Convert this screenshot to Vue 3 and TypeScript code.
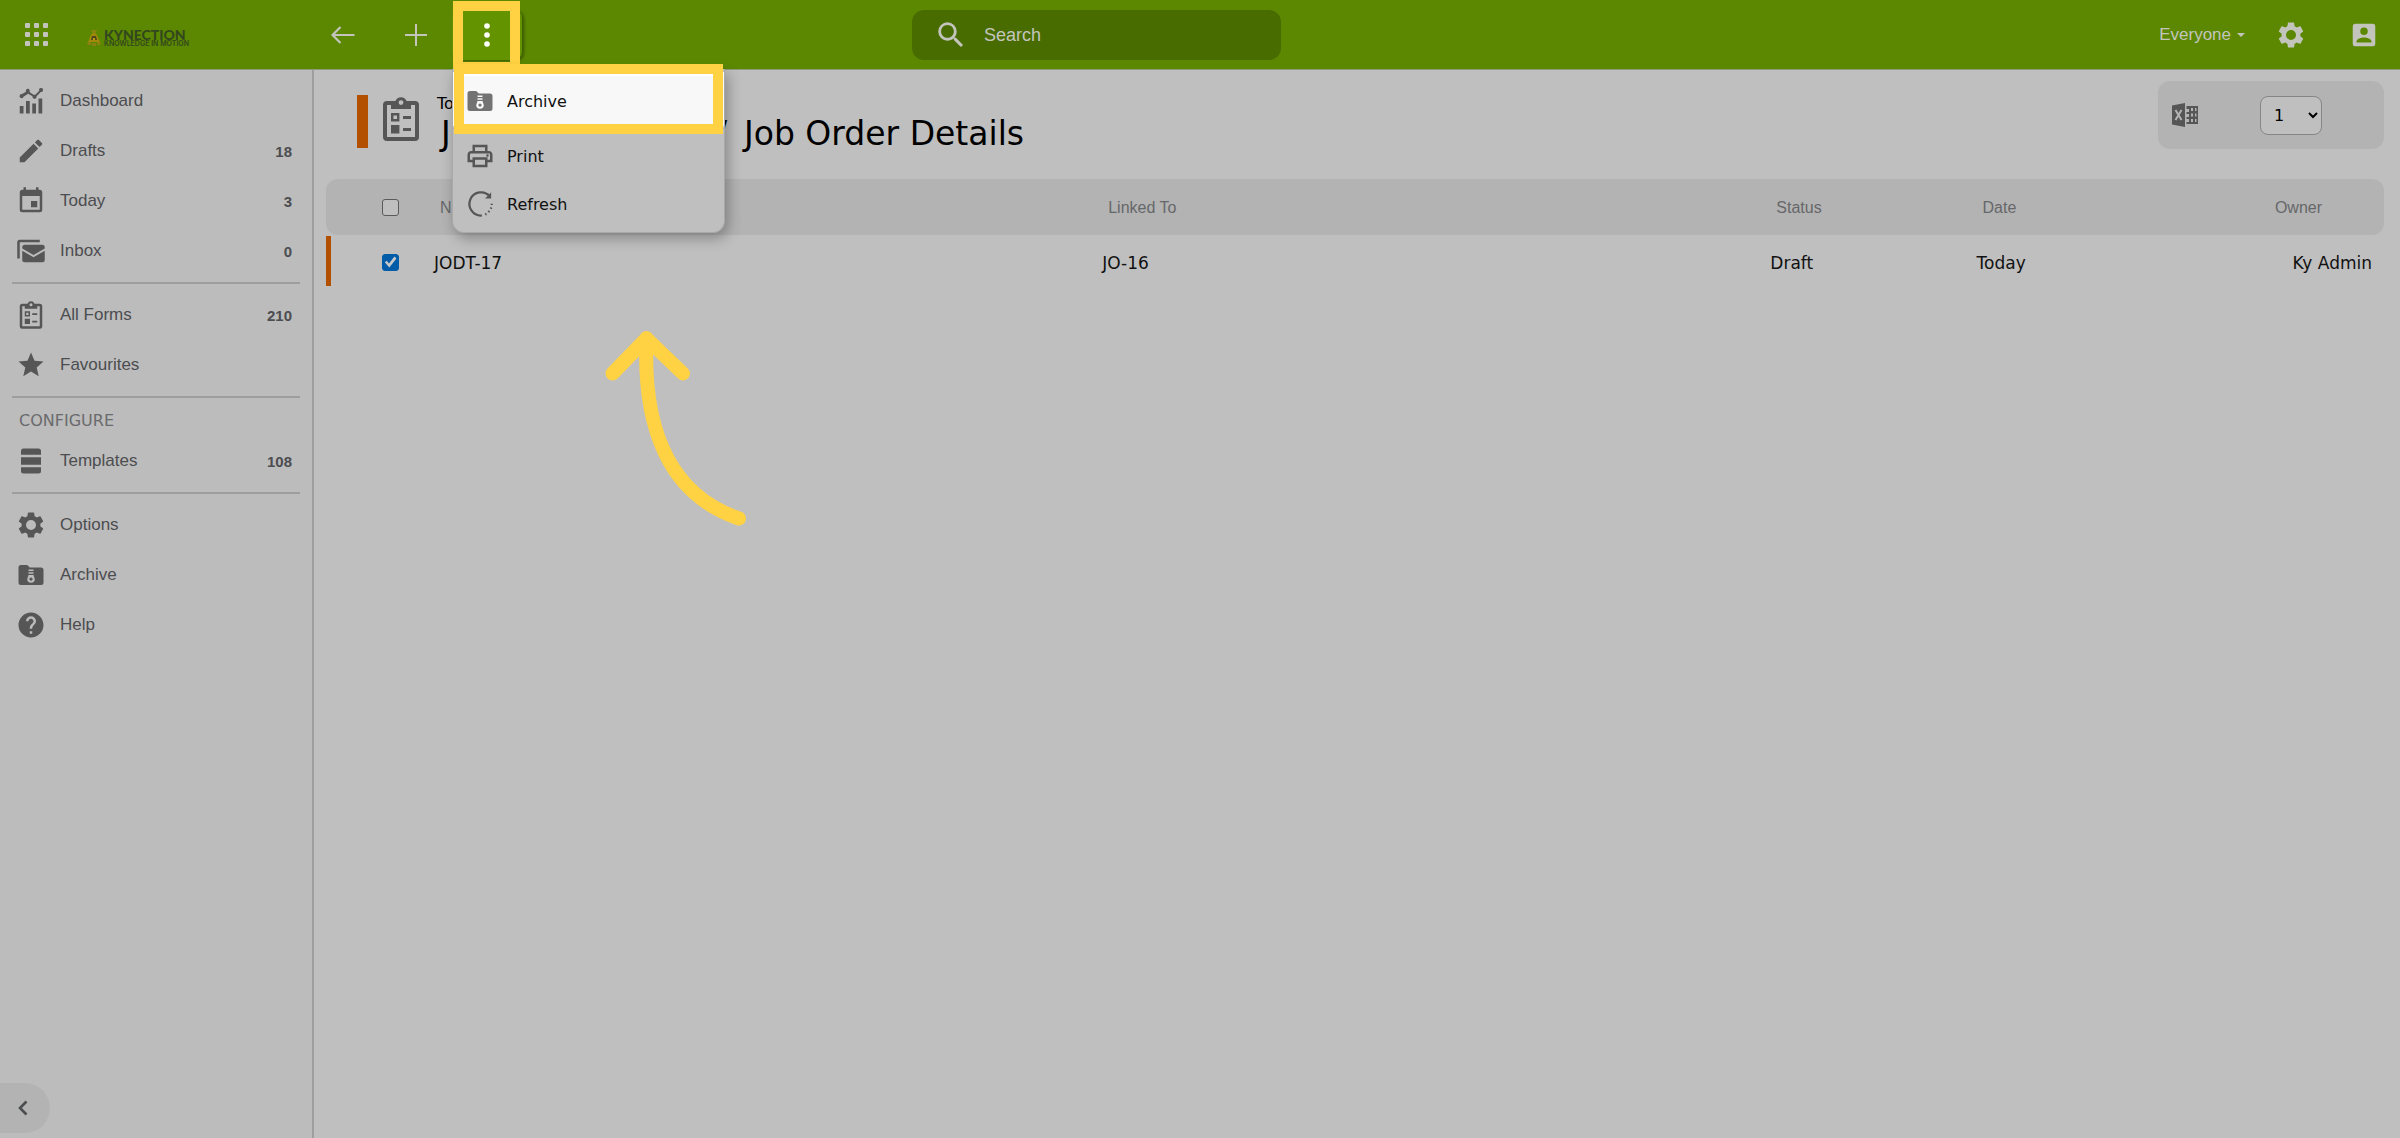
<script setup lang="ts">
import { ref } from 'vue'

type IconName =
  | 'chart' | 'pencil' | 'today' | 'inbox' | 'forms' | 'star'
  | 'templates' | 'cog' | 'archive' | 'help' | 'printer' | 'account' | 'magnify'

interface NavItem {
  label: string
  icon: IconName
  count?: number
}

interface NavGroup {
  title?: string
  items: NavItem[]
}

interface JobRow {
  name: string
  linkedTo: string
  status: string
  date: string
  owner: string
  selected: boolean
}

const icons: Record<IconName, string> = {
  chart:
    'M3 16h3v6H3zM8 12h3v10H8zM13 14h3v8h-3zM18 10h3v12h-3zM4.500 6.500 8 4.500a1.600 1.600 0 1 1 2.800.2L14 7h1.400l3.200-3.200a1.600 1.600 0 1 1 1.200 1L16.500 8.200a1.700 1.700 0 1 1-3.300 0L9.700 6.200 6 8.500a1.600 1.600 0 1 1-1.500-2Z',
  pencil:
    'M20.71,7.04C21.1,6.65 21.1,6 20.71,5.63L18.37,3.29C18,2.9 17.35,2.9 16.96,3.29L15.12,5.12L18.87,8.87M3,17.25V21H6.75L17.81,9.93L14.06,6.18L3,17.25Z',
  today:
    'M19,19H5V8H19M16,1V3H8V1H6V3H5C3.89,3 3,3.89 3,5V19A2,2 0 0,0 5,21H19A2,2 0 0,0 21,19V5C21,3.89 20.1,3 19,3H18V1M17,12H12V17H17V12Z',
  inbox:
    'M1 18V5a2 2 0 0 1 2-2H19v2H3v13ZM7 7H21a2 2 0 0 1 2 2v1L14 15.2 5 10V9a2 2 0 0 1 2-2ZM5 11.8 14 17l9-5.200V19a2 2 0 0 1-2 2H7a2 2 0 0 1-2-2Z',
  forms:
    'M5 3H9.200A3 3 0 0 1 14.800 3H19a2 2 0 0 1 2 2V21a2 2 0 0 1-2 2H5a2 2 0 0 1-2-2V5A2 2 0 0 1 5 3ZM5 5V21H19V5H17V7H7V5ZM12 2.600a1.200 1.200 0 1 0 0 2.400a1.200 1.200 0 1 0 0-2.400ZM7 9h4.200v4.200H7ZM8.200 10.200v1.800h1.800v-1.800ZM7 15h4.200v4.200H7ZM13 10.500h4v1.500h-4ZM13 16.500h4v1.500h-4Z',
  star:
    'M12,17.27L18.18,21L16.54,13.97L22,9.24L14.81,8.62L12,2L9.19,8.62L2,9.24L7.45,13.97L5.82,21L12,17.27Z',
  templates:
    'M6 2H18a2 2 0 0 1 2 2V7H4V4A2 2 0 0 1 6 2ZM4 9H20v6H4ZM4 17H20v3a2 2 0 0 1-2 2H6a2 2 0 0 1-2-2Z',
  cog:
    'M12,16A4,4 0 0,1 8,12A4,4 0 0,1 12,8A4,4 0 0,1 16,12A4,4 0 0,1 12,16M19.43,12.97C19.47,12.65 19.5,12.33 19.5,12C19.5,11.67 19.47,11.34 19.43,11L21.54,9.37C21.73,9.22 21.78,8.95 21.66,8.73L19.66,5.27C19.54,5.05 19.27,4.96 19.05,5.05L16.56,6.05C16.04,5.66 15.5,5.32 14.87,5.07L14.5,2.42C14.46,2.18 14.25,2 14,2H10C9.75,2 9.54,2.18 9.5,2.42L9.13,5.07C8.5,5.32 7.96,5.66 7.44,6.05L4.95,5.05C4.73,4.96 4.46,5.05 4.34,5.27L2.34,8.73C2.21,8.95 2.27,9.22 2.46,9.37L4.57,11C4.53,11.34 4.5,11.67 4.5,12C4.5,12.33 4.53,12.65 4.57,12.97L2.46,14.63C2.27,14.78 2.21,15.05 2.34,15.27L4.34,18.73C4.46,18.95 4.73,19.03 4.95,18.95L7.44,17.94C7.96,18.34 8.5,18.68 9.13,18.93L9.5,21.58C9.54,21.82 9.75,22 10,22H14C14.25,22 14.46,21.82 14.5,21.58L14.87,18.93C15.5,18.67 16.04,18.34 16.56,17.94L19.05,18.95C19.27,19.03 19.54,18.95 19.66,18.73L21.66,15.27C21.78,15.05 21.73,14.78 21.54,14.63L19.43,12.97Z',
  archive:
    'M4 4H9l2 2H20a2 2 0 0 1 2 2V18a2 2 0 0 1-2 2H4a2 2 0 0 1-2-2V6A2 2 0 0 1 4 4ZM10 7.500h4v1.200h-4ZM10 9.700h4v1.200h-4ZM10 11.900h4l1 3.200a3 3 0 1 1-6 0ZM12 13.900a1.300 1.300 0 1 0 0 2.600a1.300 1.300 0 1 0 0-2.600Z',
  help:
    'M15.07,11.25L14.17,12.17C13.45,12.89 13,13.5 13,15H11V14.5C11,13.39 11.45,12.39 12.17,11.67L13.41,10.41C13.78,10.05 14,9.55 14,9C14,7.89 13.1,7 12,7A2,2 0 0,0 10,9H8A4,4 0 0,1 12,5A4,4 0 0,1 16,9C16,9.88 15.64,10.67 15.07,11.25M13,19H11V17H13M12,2A10,10 0 0,0 2,12A10,10 0 0,0 12,22A10,10 0 0,0 22,12C22,6.47 17.5,2 12,2Z',
  printer:
    'M19 8C20.66 8 22 9.34 22 11V17H18V21H6V17H2V11C2 9.34 3.34 8 5 8H6V3H18V8H19M8 5V8H16V5H8M16 19V15H8V19H16M18 15H20V11C20 10.45 19.55 10 19 10H5C4.45 10 4 10.45 4 11V15H6V13H18V15M19 11.5C19 12.05 18.55 12.5 18 12.5C17.45 12.5 17 12.05 17 11.5C17 10.95 17.45 10.5 18 10.5C18.55 10.5 19 10.95 19 11.5Z',
  account:
    'M6,17C6,15 10,13.9 12,13.9C14,13.9 18,15 18,17V18H6M15,9A3,3 0 0,1 12,12A3,3 0 0,1 9,9A3,3 0 0,1 12,6A3,3 0 0,1 15,9M3,5V19A2,2 0 0,0 5,21H19A2,2 0 0,0 21,19V5A2,2 0 0,0 19,3H5C3.89,3 3,3.9 3,5Z',
  magnify:
    'M9.5,3A6.5,6.5 0 0,1 16,9.5C16,11.11 15.41,12.59 14.44,13.73L14.71,14H15.5L20.5,19L19,20.5L14,15.5V14.71L13.73,14.44C12.59,15.41 11.11,16 9.5,16A6.5,6.5 0 0,1 3,9.5A6.5,6.5 0 0,1 9.5,3M9.5,5C7,5 5,7 5,9.5C5,12 7,14 9.5,14C12,14 14,12 14,9.5C14,7 12,5 9.5,5Z',
}

const navGroups: NavGroup[] = [
  {
    items: [
      { label: 'Dashboard', icon: 'chart' },
      { label: 'Drafts', icon: 'pencil', count: 18 },
      { label: 'Today', icon: 'today', count: 3 },
      { label: 'Inbox', icon: 'inbox', count: 0 },
    ],
  },
  {
    items: [
      { label: 'All Forms', icon: 'forms', count: 210 },
      { label: 'Favourites', icon: 'star' },
    ],
  },
  {
    title: 'CONFIGURE',
    items: [{ label: 'Templates', icon: 'templates', count: 108 }],
  },
  {
    items: [
      { label: 'Options', icon: 'cog' },
      { label: 'Archive', icon: 'archive' },
      { label: 'Help', icon: 'help' },
    ],
  },
]

const rows = ref<JobRow[]>([
  { name: 'JODT-17', linkedTo: 'JO-16', status: 'Draft', date: 'Today', owner: 'Ky Admin', selected: true },
])

const allSelected = ref(false)
const search = ref('')
const page = ref('1')
</script>

<template>
  <div class="app">
    <header class="topbar">
      <div class="topbar-left">
        <div class="brand">
          <button class="icon-button apps" type="button" aria-label="Apps">
            <svg width="24" height="24" viewBox="0 0 24 24">
              <template v-for="y in 3" :key="y">
                <rect v-for="x in 3" :key="x" :x="(x - 1) * 9" :y="(y - 1) * 9" width="5" height="5" rx="1" />
              </template>
            </svg>
          </button>
          <a class="logo" href="#" aria-label="Kynection home">
            <svg width="14" height="18" viewBox="0 0 14 18">
              <path d="M4 1h6L8.500 4h-3z" fill="#86860c" />
              <path d="M7 4c3 0 4 4 5 7l1 2H1l1-2c1-3 2-7 5-7z" fill="#a3890a" />
              <path d="M5 7h4l1 4H4z" fill="#4c4a1c" />
              <path d="M6 9h2v2H6z" fill="#c49a10" />
              <path d="M0 13h4v3H1zM10 13h4l-1 3h-3zM5 14h4v3H5z" fill="#8a8112" />
            </svg>
            <span class="logo-text">
              <span class="logo-name">KYNECTION</span>
              <span class="logo-tag">KNOWLEDGE IN MOTION</span>
            </span>
          </a>
        </div>
        <div class="actions">
          <button class="icon-button action" type="button" aria-label="Back">
            <svg width="24" height="18" viewBox="0 0 24 18" class="stroke">
              <path d="M23.500 9H2M9.500 1 1.500 9l8 8" stroke-width="2.200" />
            </svg>
          </button>
          <button class="icon-button action" type="button" aria-label="Add">
            <svg width="24" height="24" viewBox="0 0 24 24" class="stroke">
              <path d="M12 1v22M1 12h22" stroke-width="2" />
            </svg>
          </button>
          <div class="more">
            <button class="icon-button more-button" type="button" aria-label="More actions" aria-expanded="true">
              <svg width="6" height="24" viewBox="0 0 6 24">
                <circle cx="3" cy="3" r="2.800" />
                <circle cx="3" cy="12" r="2.800" />
                <circle cx="3" cy="21" r="2.800" />
              </svg>
            </button>
            <div class="menu">
              <button class="menu-item highlighted" type="button">
                <svg class="icon" viewBox="0 0 24 24"><path :d="icons.archive" /></svg>
                Archive
              </button>
              <hr class="menu-line" />
              <button class="menu-item" type="button">
                <svg class="icon" viewBox="0 0 24 24"><path :d="icons.printer" /></svg>
                Print
              </button>
              <button class="menu-item" type="button">
                <svg class="icon stroke" viewBox="0 0 24 24">
                  <path d="M20 6A9.300 9.300 0 1 0 13.500 21.200" stroke-width="1.800" />
                  <path d="M20.900 2.500V7.500H16L18.700 5Z" class="solid" />
                  <path
                    d="M16.200 20.400l1-.5M18.700 18.500l.8-.9M20.600 15.800l.5-1M21.400 12.800v-1"
                    stroke-width="1.800"
                  />
                </svg>
                Refresh
              </button>
            </div>
          </div>
        </div>
      </div>

      <label class="search">
        <svg width="34" height="34" viewBox="0 0 24 24"><path :d="icons.magnify" /></svg>
        <input v-model="search" type="search" placeholder="Search" aria-label="Search" />
      </label>

      <div class="topbar-right">
        <button class="audience" type="button">
          Everyone
          <svg width="8" height="4" viewBox="0 0 8 4"><path d="M0 0h8L4 4z" /></svg>
        </button>
        <button class="icon-button" type="button" aria-label="Settings">
          <svg class="icon" viewBox="0 0 24 24"><path :d="icons.cog" /></svg>
        </button>
        <button class="icon-button" type="button" aria-label="Account">
          <svg class="icon" viewBox="0 0 24 24"><path :d="icons.account" /></svg>
        </button>
      </div>
    </header>

    <div class="body">
      <nav class="sidebar">
        <template v-for="(group, index) in navGroups" :key="index">
          <hr v-if="index > 0" class="nav-line" />
          <div v-if="group.title" class="nav-title">{{ group.title }}</div>
          <a v-for="item in group.items" :key="item.label" class="nav-item" href="#">
            <svg class="icon" viewBox="0 0 24 24"><path :d="icons[item.icon]" /></svg>
            <span class="nav-label">{{ item.label }}</span>
            <span v-if="item.count !== undefined" class="nav-count">{{ item.count }}</span>
          </a>
        </template>
        <button class="collapse" type="button" aria-label="Collapse sidebar">
          <svg width="10" height="16" viewBox="0 0 10 16" class="stroke">
            <path d="M8.500 1.500 2 8l6.500 6.500" stroke-width="2.600" />
          </svg>
        </button>
      </nav>

      <main class="content">
        <div class="heading">
          <div class="heading-mark"></div>
          <svg class="heading-icon" viewBox="0 0 24 24"><path :d="icons.forms" /></svg>
          <div class="heading-text">
            <div class="heading-sub">Today</div>
            <h1 class="heading-title">
              <span class="crumb"><span>Job Orders</span><span>/</span></span>
              <span>Job Order Details</span>
            </h1>
          </div>
          <div class="tools">
            <button class="icon-button" type="button" aria-label="Export to Excel">
              <svg width="26" height="24" viewBox="0 0 26 24">
                <path d="M0 2.500 13 0v24L0 21.500Z" />
                <path d="M14.500 3H26v18H14.500v-2H17v-3h-2.500v-2H17v-3h-2.500V9H17V6h-2.500ZM19 5v3h2V5ZM23 5v3h1.500V5ZM19 10.500v3h2v-3ZM23 10.500v3h1.500v-3ZM19 16v3h2v-3ZM23 16v3h1.500v-3Z" />
                <path d="M3.500 7 9.500 17M9.500 7 3.500 17" class="excel-cross" />
              </svg>
            </button>
            <select v-model="page" class="page-select" aria-label="Page">
              <option>1</option>
            </select>
          </div>
        </div>

        <table class="jobs">
          <colgroup>
            <col class="col-check" />
            <col class="col-wide" />
            <col class="col-wide" />
            <col class="col-narrow" />
            <col class="col-narrow" />
            <col class="col-narrow" />
          </colgroup>
          <thead>
            <tr>
              <th class="check-cell">
                <input v-model="allSelected" type="checkbox" aria-label="Select all" />
              </th>
              <th>Name</th>
              <th>Linked To</th>
              <th>Status</th>
              <th>Date</th>
              <th class="owner">Owner</th>
            </tr>
          </thead>
          <tbody>
            <tr v-for="row in rows" :key="row.name">
              <td class="check-cell">
                <input v-model="row.selected" type="checkbox" :aria-label="`Select ${row.name}`" />
              </td>
              <td>{{ row.name }}</td>
              <td>{{ row.linkedTo }}</td>
              <td>{{ row.status }}</td>
              <td>{{ row.date }}</td>
              <td class="owner">{{ row.owner }}</td>
            </tr>
          </tbody>
        </table>
      </main>
    </div>

    <svg class="pointer" width="144" height="204" viewBox="0 0 144 204" aria-hidden="true">
      <path d="M46.500 18C42.500 110 70 175 139 198.500M12.500 53.500 46.500 18.500 83 53.500" />
    </svg>
  </div>
</template>

<style>
body {
  margin: 0;
  background: #bfbfbf;
}
</style>

<style scoped>
.app {
  position: relative;
  display: flex;
  flex-direction: column;
  min-height: 100vh;
  background: #bfbfbf;
  color: #111;
  font-family: 'DejaVu Sans', sans-serif;
  font-size: 16px;
}

.app,
.app *,
.app *::before,
.app *::after {
  box-sizing: border-box;
}

button {
  padding: 0;
  border: 0;
  background: none;
  color: inherit;
  font: inherit;
}

svg {
  display: block;
  flex: none;
  fill: currentColor;
  fill-rule: evenodd;
}

.stroke {
  fill: none;
  stroke: currentColor;
}

.solid {
  fill: currentColor;
  stroke: none;
}

.icon {
  width: 30px;
  height: 30px;
}

.icon-button {
  display: flex;
  align-items: center;
  justify-content: center;
}

.topbar {
  position: relative;
  z-index: 2;
  display: flex;
  align-items: center;
  height: 70px;
  background: #5b8800;
  box-shadow: inset 0 -1px #8f9b7c;
  color: #c3c5bd;
  font-family: 'Liberation Sans', sans-serif;
}

.topbar-left {
  display: flex;
  align-items: center;
  width: 38%;
}

.brand {
  display: flex;
  align-items: center;
  width: 306px;
  padding-left: 25px;
}

.logo {
  display: flex;
  gap: 3px;
  align-items: center;
  margin: 6px 0 0 38px;
  color: #33471f;
  text-decoration: none;
}

.logo-text {
  display: flex;
  flex-direction: column;
}

.logo-name {
  font-family: Lato, sans-serif;
  font-size: 14px;
  font-weight: 900;
  line-height: 12px;
}

.logo-tag {
  font-family: Inter, sans-serif;
  font-size: 7px;
  font-weight: 600;
  line-height: 6px;
}

.actions {
  display: flex;
  align-items: center;
}

.action {
  width: 73px;
  height: 50px;
}

.more {
  position: relative;
}

.more-button {
  position: relative;
  width: 70px;
  height: 50px;
  border-radius: 8px;
  background: #639400;
  box-shadow: 2px 1px 3px rgba(0, 0, 0, 0.35);
  color: #fff;
}

.more-button::after {
  content: '';
  position: absolute;
  inset: -9px 2px -12px 1px;
  border: 10px solid #ffd243;
}

.menu {
  position: absolute;
  top: 59px;
  left: 0;
  width: 273px;
  padding: 7px 0 4px;
  background: #bfbfbf;
  border: 1px solid #a9a9a9;
  border-top: 0;
  border-radius: 0 0 12px 12px;
  box-shadow: 3px 5px 14px rgba(0, 0, 0, 0.3);
  color: #111;
  font-family: 'DejaVu Sans', sans-serif;
  font-size: 16px;
}

.menu-item {
  position: relative;
  display: flex;
  align-items: center;
  gap: 12px;
  width: 100%;
  height: 48px;
  padding-left: 12px;
}

.menu-item .icon {
  color: #565656;
}

.menu-item.highlighted {
  height: 50px;
  background: #f8f8f8;
  box-shadow: 0 -4px #fff;
}

.menu-item.highlighted .icon {
  color: #737373;
}

.menu-item.highlighted::after {
  content: '';
  position: absolute;
  inset: -12px 1px -8px 1px;
  border: 10px solid #ffd243;
}

.menu-line {
  height: 1px;
  margin: 2px 0 3px;
  border: 0;
  background: #a9a9a9;
}

.search {
  display: flex;
  align-items: center;
  width: 369px;
  height: 50px;
  padding-left: 22px;
  gap: 16px;
  border-radius: 12px;
  background: #496c00;
  font-size: 18px;
}

.search input {
  flex: 1;
  min-width: 0;
  padding: 0;
  border: 0;
  outline: 0;
  background: none;
  color: inherit;
  font: inherit;
}

.search input::placeholder {
  color: inherit;
  opacity: 1;
}

.topbar-right {
  display: flex;
  align-items: center;
  margin-left: auto;
  padding-right: 21px;
  gap: 43px;
}

.audience {
  display: flex;
  align-items: center;
  gap: 6px;
  margin-right: -12px;
  font-size: 17px;
}

.body {
  display: flex;
  flex: 1;
}

.sidebar {
  display: flex;
  flex-direction: column;
  flex: none;
  width: 314px;
  padding: 6px 0 5px;
  background: #bcbcbc;
  border-right: 2px solid #9f9f9f;
  color: #4c4d50;
  font-family: 'Liberation Sans', sans-serif;
  font-size: 17px;
}

.nav-item {
  display: flex;
  align-items: center;
  gap: 14px;
  height: 50px;
  padding: 0 20px 0 16px;
  color: inherit;
  text-decoration: none;
}

.nav-item .icon {
  color: #565656;
}

.nav-label {
  flex: 1;
}

.nav-count {
  font-size: 15px;
  font-weight: 700;
}

.nav-line {
  width: 288px;
  height: 2px;
  margin: 6px 12px;
  border: 0;
  background: #9d9d9f;
}

.nav-title {
  height: 32px;
  padding-left: 19px;
  color: #6a6a6c;
  font-family: 'DejaVu Sans', sans-serif;
  font-size: 16px;
  line-height: 34px;
}

.collapse {
  display: flex;
  align-items: center;
  width: 50px;
  height: 50px;
  margin-top: auto;
  padding-left: 18px;
  border-radius: 0 25px 25px 0;
  background: #b3b3b3;
}

.content {
  flex: 1;
  min-width: 0;
  padding: 11px 16px 0 12px;
}

.heading {
  display: flex;
  align-items: center;
  height: 68px;
  padding-left: 31px;
}

.heading-mark {
  width: 11px;
  height: 53px;
  margin-top: 12px;
  background: #b35000;
}

.heading-icon {
  width: 48px;
  height: 48px;
  margin: 8px 12px 0 9px;
  color: #565656;
}

.heading-text {
  flex: 1;
  color: #000;
}

.heading-sub {
  margin-top: 18px;
  line-height: 20px;
}

.heading-title {
  display: flex;
  margin: 0;
  font-size: 33px;
  font-weight: 400;
  line-height: 40px;
}

.crumb {
  display: flex;
  justify-content: space-between;
  width: 290px;
  margin-right: 17px;
  padding-left: 4px;
}

.tools {
  display: flex;
  align-items: center;
  justify-content: space-between;
  width: 226px;
  height: 68px;
  padding: 0 62px 0 14px;
  border-radius: 12px;
  background: #b3b3b3;
  color: #565656;
}

.excel-cross {
  stroke: #b3b3b3;
  stroke-width: 2;
}

.page-select {
  width: 62px;
  height: 39px;
  padding-left: 9px;
  border: 1px solid #85858a;
  border-radius: 8px;
  background: #bfbfbf;
  color: #000;
  font: inherit;
}

.jobs {
  width: 100%;
  margin-top: 30px;
  border-spacing: 0;
  table-layout: fixed;
  text-align: left;
}

.col-check {
  width: 5%;
}

.col-wide {
  width: 32.4%;
}

.col-narrow {
  width: 10%;
}

th {
  height: 56px;
  padding: 2px 12px 0 11px;
  background: #b3b3b3;
  color: #66676a;
  font-family: 'Liberation Sans', sans-serif;
  font-weight: 400;
}

th:first-child {
  border-radius: 12px 0 0 12px;
}

th:last-child {
  border-radius: 0 12px 12px 0;
}

td {
  height: 52px;
  padding: 4px 5px 0;
  font-size: 17px;
}

td.check-cell {
  padding-top: 2px;
  background: linear-gradient(#b35000, #b35000) 0 1px / 5px 50px no-repeat;
}

.check-cell {
  padding-top: 0;
  padding-left: 56px;
}

th.owner {
  padding-right: 62px;
  text-align: right;
}

td.owner {
  padding-right: 12px;
  text-align: right;
}

input[type='checkbox'] {
  display: block;
  width: 17px;
  height: 17px;
  margin: 0;
  appearance: none;
  border: 1px solid #5a5a5a;
  border-radius: 3px;
  background: #bfbfbf;
}

input[type='checkbox']:checked {
  border-color: #005ba8;
  background: #005ba8;
}

input[type='checkbox']:checked::after {
  content: '';
  display: block;
  width: 15px;
  height: 15px;
  background: #c8c8c8;
  clip-path: polygon(12% 52%, 25% 42%, 40% 60%, 76% 14%, 90% 26%, 42% 86%);
}

.pointer {
  position: absolute;
  top: 320px;
  left: 600px;
  overflow: visible;
  fill: none;
  stroke: #ffd243;
  stroke-width: 14px;
  stroke-linecap: round;
  stroke-linejoin: round;
}
</style>
